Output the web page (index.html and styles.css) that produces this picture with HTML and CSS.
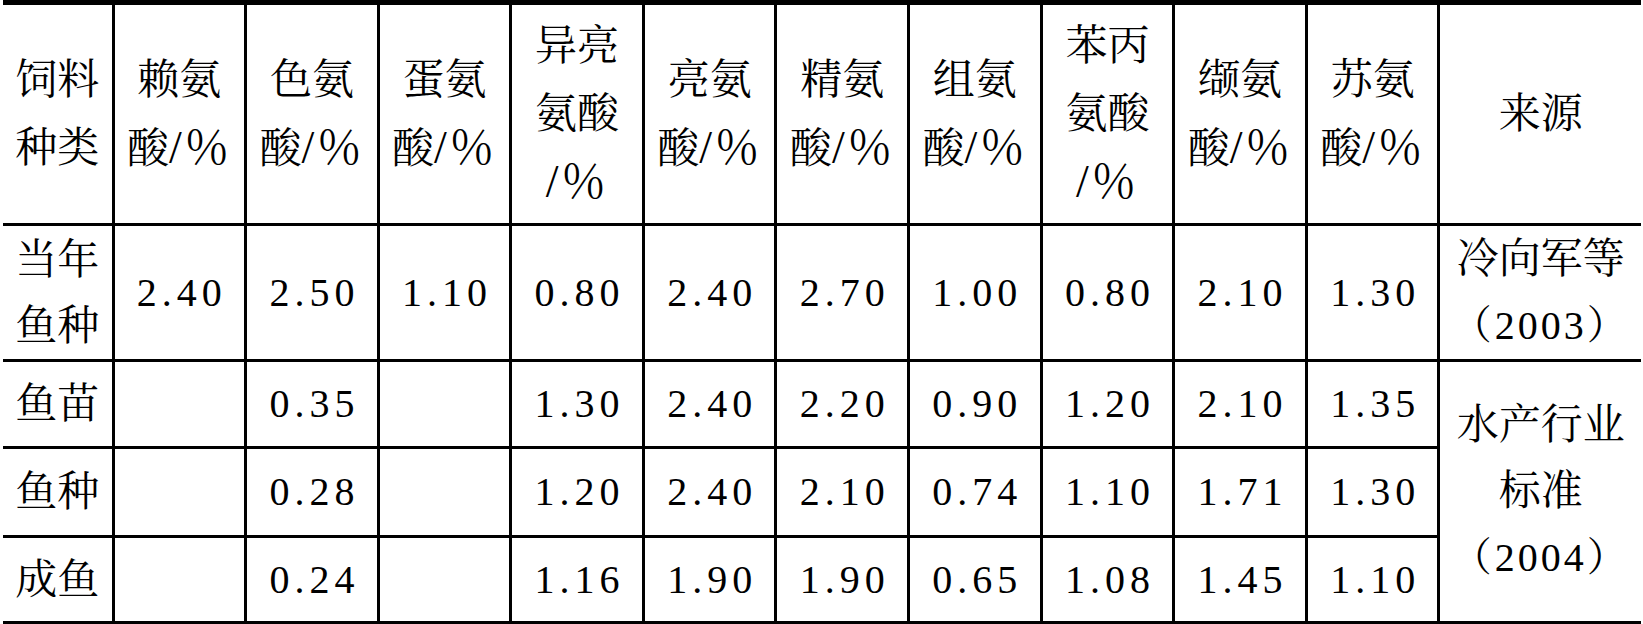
FILE: index.html
```html
<!DOCTYPE html>
<html lang="zh-CN">
<head>
<meta charset="utf-8">
<title>饲料氨基酸需要量</title>
<link rel="stylesheet" href="styles.css">
</head>
<body>
<div class="wrap">
<table class="aa">
  <colgroup>
    <col class="c-first">
    <col class="c-num"><col class="c-num"><col class="c-num"><col class="c-num"><col class="c-num">
    <col class="c-num"><col class="c-num"><col class="c-num"><col class="c-num"><col class="c-num">
    <col class="c-src">
  </colgroup>
  <thead>
    <tr class="r-head">
      <th>饲料<br>种类</th>
      <th>赖氨<br>酸<span class="pc">/％</span></th>
      <th>色氨<br>酸<span class="pc">/％</span></th>
      <th>蛋氨<br>酸<span class="pc">/％</span></th>
      <th>异亮<br>氨酸<br><span class="pc">/％</span></th>
      <th>亮氨<br>酸<span class="pc">/％</span></th>
      <th>精氨<br>酸<span class="pc">/％</span></th>
      <th>组氨<br>酸<span class="pc">/％</span></th>
      <th>苯丙<br>氨酸<br><span class="pc">/％</span></th>
      <th>缬氨<br>酸<span class="pc">/％</span></th>
      <th>苏氨<br>酸<span class="pc">/％</span></th>
      <th>来源</th>
    </tr>
  </thead>
  <tbody>
    <tr class="r-1">
      <td>当年<br>鱼种</td>
      <td class="num">2.40</td>
      <td class="num">2.50</td>
      <td class="num">1.10</td>
      <td class="num">0.80</td>
      <td class="num">2.40</td>
      <td class="num">2.70</td>
      <td class="num">1.00</td>
      <td class="num">0.80</td>
      <td class="num">2.10</td>
      <td class="num">1.30</td>
      <td>冷向军等<br><span class="yr">（2003）</span></td>
    </tr>
    <tr class="r-2">
      <td>鱼苗</td>
      <td class="num"></td>
      <td class="num">0.35</td>
      <td class="num"></td>
      <td class="num">1.30</td>
      <td class="num">2.40</td>
      <td class="num">2.20</td>
      <td class="num">0.90</td>
      <td class="num">1.20</td>
      <td class="num">2.10</td>
      <td class="num">1.35</td>
      <td rowspan="3">水产行业<br>标准<br><span class="yr">（2004）</span></td>
    </tr>
    <tr class="r-3">
      <td>鱼种</td>
      <td class="num"></td>
      <td class="num">0.28</td>
      <td class="num"></td>
      <td class="num">1.20</td>
      <td class="num">2.40</td>
      <td class="num">2.10</td>
      <td class="num">0.74</td>
      <td class="num">1.10</td>
      <td class="num">1.71</td>
      <td class="num">1.30</td>
    </tr>
    <tr class="r-4">
      <td>成鱼</td>
      <td class="num"></td>
      <td class="num">0.24</td>
      <td class="num"></td>
      <td class="num">1.16</td>
      <td class="num">1.90</td>
      <td class="num">1.90</td>
      <td class="num">0.65</td>
      <td class="num">1.08</td>
      <td class="num">1.45</td>
      <td class="num">1.10</td>
    </tr>
  </tbody>
</table>
</div>
</body>
</html>
```

FILE: styles.css
```css
html, body {
  margin: 0;
  padding: 0;
  background: #ffffff;
}

.wrap {
  padding: 0 2px 0 3px;
}

.aa {
  border-collapse: collapse;
  table-layout: fixed;
  width: 1638px;
  font-family: "Liberation Serif", "Noto Serif CJK SC", "Noto Sans CJK SC", serif;
  font-size: 42px;
  line-height: 66px;
  color: #000000;
  border-top: 5px solid #000;
  border-bottom: 5px solid #000;
}

.c-first { width: 110px; }
.c-num { width: 132.6px; }
.c-src { width: 202px; }

.aa th,
.aa td {
  padding: 0;
  text-align: center;
  vertical-align: middle;
  font-weight: normal;
  border: 3px solid #000;
  white-space: nowrap;
}

.aa tr > :first-child { border-left: none; }
.aa tr > :last-child { border-right: none; }
.aa .r-2 > td[rowspan] { border-right: none; }

.r-head { height: 222px; }
.r-head th { line-height: 68px; }
.r-1 { height: 132px; }
.r-2 { height: 87px; }
.r-3 { height: 89px; }
.r-4 { height: 87px; }

.pc {
  font-size: 46px;
  letter-spacing: 2px;
}

.num {
  font-size: 40px;
  letter-spacing: 5px;
}

.aa td.num {
  padding-left: 5px;
}

.yr {
  font-size: 40px;
  letter-spacing: 3px;
}
```
